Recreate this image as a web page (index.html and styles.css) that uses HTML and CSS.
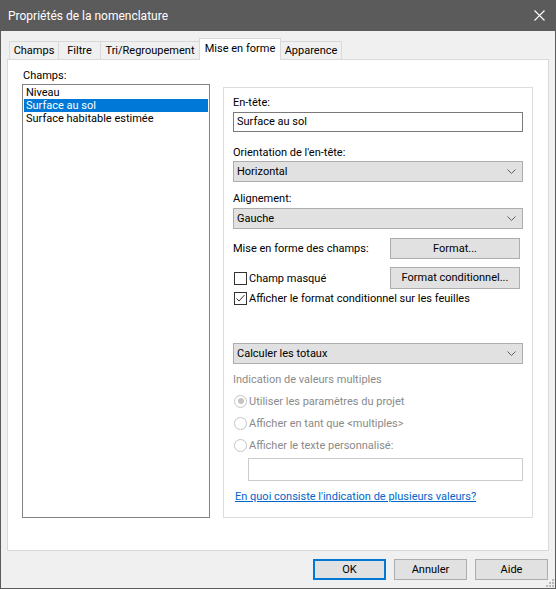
FILE: index.html
```html
<!DOCTYPE html>
<html lang="fr">
<head>
<meta charset="utf-8">
<title>Propriétés de la nomenclature</title>
<link rel="stylesheet" href="styles.css">
</head>
<body>
<div class="window">
  <div class="titlebar">
    <span class="title">Propriétés de la nomenclature</span>
    <svg class="close" width="11" height="11" viewBox="0 0 11 11"><path d="M0.5 0.5 L10.5 10.5 M10.5 0.5 L0.5 10.5" stroke="#ffffff" stroke-width="1.1" fill="none"/></svg>
  </div>
  <div class="body">
    <div class="tabs">
      <div class="tab t1">Champs</div>
      <div class="tab t2">Filtre</div>
      <div class="tab t3">Tri/Regroupement</div>
      <div class="tab t4 active">Mise en forme</div>
      <div class="tab t5">Apparence</div>
    </div>
    <div class="panel">
      <div class="leftcol">
        <div class="lbl champs-lbl">Champs:</div>
        <div class="listbox">
          <div class="item">Niveau</div>
          <div class="item selected">Surface au sol</div>
          <div class="item">Surface habitable estimée</div>
        </div>
      </div>
      <div class="group">
        <div class="lbl l-entete">En-tête:</div>
        <div class="textbox">Surface au sol</div>
        <div class="lbl l-orient">Orientation de l'en-tête:</div>
        <div class="combo c-orient"><span>Horizontal</span><svg class="chev" width="9" height="5" viewBox="0 0 9 5"><path d="M0.5 0.5 L4.5 4.5 L8.5 0.5" stroke="#606060" fill="none"/></svg></div>
        <div class="lbl l-align">Alignement:</div>
        <div class="combo c-align"><span>Gauche</span><svg class="chev" width="9" height="5" viewBox="0 0 9 5"><path d="M0.5 0.5 L4.5 4.5 L8.5 0.5" stroke="#606060" fill="none"/></svg></div>
        <div class="row r-format">
          <span class="rowtext">Mise en forme des champs:</span>
          <div class="btn fbtn">Format...</div>
        </div>
        <div class="row r-masque">
          <span class="check"><span class="box"></span>Champ masqué</span>
          <div class="btn fbtn fbtn2">Format conditionnel...</div>
        </div>
        <div class="check r-afficher"><span class="box checked"><svg width="11" height="11" viewBox="0 0 11 11"><path d="M1.5 5.5 L4 8 L9.5 2" stroke="#333" stroke-width="1" fill="none"/></svg></span>Afficher le format conditionnel sur les feuilles</div>
        <div class="combo c-totaux"><span>Calculer les totaux</span><svg class="chev" width="9" height="5" viewBox="0 0 9 5"><path d="M0.5 0.5 L4.5 4.5 L8.5 0.5" stroke="#606060" fill="none"/></svg></div>
        <div class="lbl disabled l-indic">Indication de valeurs multiples</div>
        <div class="radio r1"><span class="dot on"></span>Utiliser les paramètres du projet</div>
        <div class="radio r2"><span class="dot"></span>Afficher en tant que &lt;multiples&gt;</div>
        <div class="radio r3"><span class="dot"></span>Afficher le texte personnalisé:</div>
        <div class="textbox disabled-box"></div>
        <a class="link" href="#">En quoi consiste l'indication de plusieurs valeurs?</a>
      </div>
    </div>
    <div class="buttons">
      <div class="btn dbtn default">OK</div>
      <div class="btn dbtn">Annuler</div>
      <div class="btn dbtn">Aide</div>
    </div>
    <svg class="grip" width="8" height="8" viewBox="0 0 8 8">
      <rect x="6" y="0" width="2" height="2" fill="#b8b8b8"/>
      <rect x="3" y="3" width="2" height="2" fill="#b8b8b8"/>
      <rect x="6" y="3" width="2" height="2" fill="#b8b8b8"/>
      <rect x="0" y="6" width="2" height="2" fill="#b8b8b8"/>
      <rect x="3" y="6" width="2" height="2" fill="#b8b8b8"/>
      <rect x="6" y="6" width="2" height="2" fill="#b8b8b8"/>
    </svg>
  </div>
</div>
</body>
</html>
```
FILE: styles.css
```css
* { box-sizing: border-box; }
html, body { margin: 0; padding: 0; }
body {
  font-family: Roboto, "Liberation Sans", sans-serif;
  font-size: 11px;
  color: #000;
  background: #f0f0f0;
}
.window {
  width: 556px;
  height: 589px;
  display: flex;
  flex-direction: column;
  border: 1px solid #5b5b5b;
  border-top: none;
}
.titlebar {
  height: 31px;
  background: #5b5b5b;
  color: #fff;
  display: flex;
  align-items: center;
  justify-content: space-between;
  padding: 0 11px 0 8px;
  margin: 0 -1px;
  flex: none;
}
.title { font-size: 12px; line-height: 16px; }
.close { display: block; }
.body {
  flex: 1;
  position: relative;
  background: #f0f0f0;
  padding: 7px 6px 0 6px;
  display: flex;
  flex-direction: column;
}
.tabs {
  display: flex;
  height: 22px;
  align-items: flex-end;
  position: relative;
  z-index: 1;
  margin-bottom: -1px;
  padding-left: 2px;
}
.tab {
  height: 18px;
  margin-bottom: 1px;
  line-height: 17px;
  border: 1px solid #d9d9d9;
  border-bottom: none;
  background: #f0f0f0;
  text-align: center;
  margin-right: -1px;
  white-space: nowrap;
}
.t1 { width: 50px; }
.t2 { width: 43px; }
.t3 { width: 100px; }
.t4 { width: 82px; }
.t5 { width: 62px; }
.tab.active {
  height: 22px;
  margin-bottom: 0;
  background: #fff;
  line-height: 19px;
  position: relative;
  z-index: 2;
}
.panel {
  width: 542px;
  height: 492px;
  border: 1px solid #d9d9d9;
  background: #fff;
  display: flex;
  padding: 8px 0 0 14px;
  gap: 13px;
  flex: none;
}
.lbl { line-height: 16px; height: 16px; white-space: nowrap; }
.leftcol { display: flex; flex-direction: column; width: 188px; }
.champs-lbl { margin-left: 1px; }
.listbox {
  width: 188px;
  height: 434px;
  border: 1px solid #828282;
  padding: 1px 1px;
}
.item { height: 13px; line-height: 13px; padding-left: 2px; white-space: nowrap; }
.selected { background: #0078d7; color: #fff; }
.group {
  margin-top: 19px;
  width: 310px;
  height: 431px;
  border: 1px solid #dcdcdc;
  padding: 0 9px;
  display: flex;
  flex-direction: column;
}
.l-entete { margin-top: 7px; }
.textbox {
  margin-top: 1px;
  height: 20px;
  width: 290px;
  border: 1px solid #7a7a7a;
  line-height: 18px;
  padding-left: 3px;
}
.l-orient { margin-top: 13px; }
.combo {
  height: 21px;
  width: 290px;
  border: 1px solid #adadad;
  background: #e1e1e1;
  display: flex;
  align-items: center;
  justify-content: space-between;
  padding: 0 6px 0 3px;
  line-height: 19px;
}
.chev { display: block; }
.l-align { margin-top: 9px; }
.c-align { margin-top: 1px; }
.row { display: flex; align-items: center; justify-content: space-between; width: 287px; }
.r-format { margin-top: 9px; height: 21px; }
.r-masque { margin-top: 8px; height: 22px; }
.btn {
  border: 1px solid #adadad;
  background: #e1e1e1;
  text-align: center;
  line-height: 19px;
  height: 21px;
  white-space: nowrap;
}
.fbtn { width: 130px; }
.fbtn2 { height: 22px; line-height: 20px; }
.check { display: flex; align-items: center; white-space: nowrap; }
.box {
  width: 13px; height: 13px;
  border: 1px solid #333;
  background: #fff;
  margin-right: 2px;
  margin-left: 1px;
  display: flex; align-items: center; justify-content: center;
  flex: none;
}
.box svg { display: block; }
.r-afficher { margin-top: 3px; height: 13px; }
.c-totaux { margin-top: 38px; height: 21px; }
.l-indic { margin-top: 8px; }
.disabled { color: #8a8a8a; }
.radio {
  display: flex; align-items: center; height: 14px; color: #8a8a8a; white-space: nowrap;
}
.r1 { margin-top: 6px; }
.r2, .r3 { margin-top: 8px; }
.dot {
  width: 13px; height: 13px; border-radius: 50%;
  border: 1px solid #c4c4c4;
  background: #fff;
  margin-left: 1px; margin-right: 2px;
  position: relative;
  flex: none;
}
.dot.on::after {
  content: "";
  position: absolute;
  left: 2.5px; top: 2.5px;
  width: 6px; height: 6px; border-radius: 50%;
  background: #c4c4c4;
}
.disabled-box {
  margin-top: 6px;
  margin-left: 15px;
  width: 275px;
  height: 23px;
  border-color: #cccccc;
}
.link {
  margin-top: 8px;
  color: #0066cc;
  line-height: 16px;
  white-space: nowrap;
  margin-left: 2px;
}
.buttons {
  display: flex;
  justify-content: flex-end;
  gap: 8px;
  margin-top: 8px;
  padding-right: 1px;
}
.dbtn { width: 73px; height: 21px; line-height: 19px; }
.default { border: 2px solid #0078d7; line-height: 17px; }
.grip { position: absolute; right: 1px; bottom: 1px; display: block; }
```
